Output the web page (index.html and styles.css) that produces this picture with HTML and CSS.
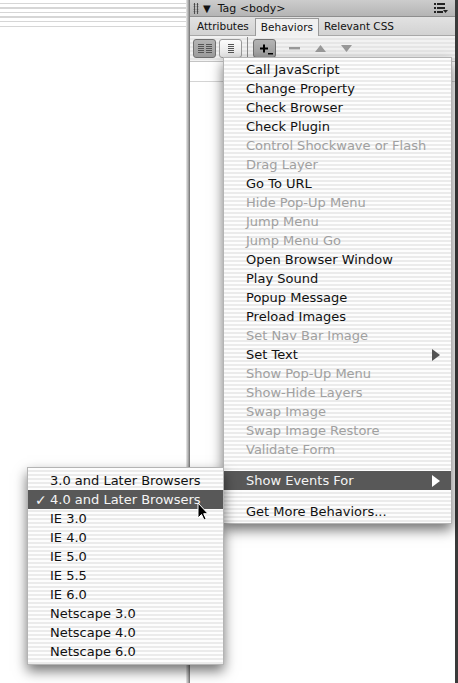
FILE: index.html
```html
<!DOCTYPE html>
<html>
<head>
	<meta charset="UTF-8">
	<title>Behaviors</title>
	<link rel="stylesheet" href="styles.css">
</head>
<body>
<div class="screen">
	<div class="doc">
		<div class="doc-bar"></div>
	</div>
	<div class="divider"></div>
	<div class="panel">
		<div class="panel-head">
			<span class="grip"></span>
			<span class="twisty">▼</span>
			<span class="panel-title">Tag &lt;body&gt;</span>
			<svg class="opts" width="14" height="10" viewBox="0 0 14 10">
				<rect x="0" y="0" width="2" height="2" fill="#222"/>
				<rect x="3" y="0" width="8" height="2" fill="#222"/>
				<rect x="0" y="4" width="2" height="2" fill="#222"/>
				<rect x="3" y="4" width="8" height="2" fill="#222"/>
				<rect x="0" y="8" width="2" height="2" fill="#222"/>
				<rect x="3" y="8" width="6" height="2" fill="#222"/>
				<path d="M9 7h5l-2.5 3z" fill="#222"/>
			</svg>
		</div>
		<div class="tabs">
			<span class="tab">Attributes</span>
			<span class="tab sel">Behaviors</span>
			<span class="tab">Relevant CSS</span>
		</div>
		<div class="tools">
			<span class="tbtn down">
				<svg width="14" height="9" viewBox="0 0 14 9">
					<path d="M0 .5h6M0 2.5h6M0 4.5h6M0 6.5h6M0 8.5h6M8 .5h6M8 2.5h6M8 4.5h6M8 6.5h6M8 8.5h6" stroke="#555" stroke-width="1"/>
				</svg>
			</span>
			<span class="tbtn">
				<svg width="6" height="9" viewBox="0 0 6 9">
					<path d="M0 .5h6M0 2.5h6M0 4.5h6M0 6.5h6M0 8.5h6" stroke="#555" stroke-width="1"/>
				</svg>
			</span>
			<span class="tsep"></span>
			<span class="tbtn down plus">
				<svg width="16" height="14" viewBox="0 0 16 14">
					<path d="M3 6.5h8M7 2.5v8" stroke="#000" stroke-width="2"/>
					<path d="M11 11h5v1.5h-5z" fill="#000"/>
				</svg>
			</span>
			<span class="tico">
				<svg width="11" height="3" viewBox="0 0 11 3"><rect width="11" height="2.4" fill="#999"/></svg>
			</span>
			<span class="tico">
				<svg width="11" height="7" viewBox="0 0 11 7"><path d="M0 7L5.5 0 11 7z" fill="#999"/></svg>
			</span>
			<span class="tico">
				<svg width="11" height="7" viewBox="0 0 11 7"><path d="M0 0h11L5.5 7z" fill="#999"/></svg>
			</span>
		</div>
		<div class="list">
			<div class="list-row"></div>
		</div>
	</div>
	<div class="edge"></div>
</div>

<div class="menu main">
	<div class="mi">Call JavaScript</div>
	<div class="mi">Change Property</div>
	<div class="mi">Check Browser</div>
	<div class="mi">Check Plugin</div>
	<div class="mi off">Control Shockwave or Flash</div>
	<div class="mi off">Drag Layer</div>
	<div class="mi">Go To URL</div>
	<div class="mi off">Hide Pop-Up Menu</div>
	<div class="mi off">Jump Menu</div>
	<div class="mi off">Jump Menu Go</div>
	<div class="mi">Open Browser Window</div>
	<div class="mi">Play Sound</div>
	<div class="mi">Popup Message</div>
	<div class="mi">Preload Images</div>
	<div class="mi off">Set Nav Bar Image</div>
	<div class="mi">Set Text<span class="arrow"></span></div>
	<div class="mi off">Show Pop-Up Menu</div>
	<div class="mi off">Show-Hide Layers</div>
	<div class="mi off">Swap Image</div>
	<div class="mi off">Swap Image Restore</div>
	<div class="mi off">Validate Form</div>
	<div class="msep"></div>
	<div class="mi hot">Show Events For<span class="arrow"></span></div>
	<div class="msep"></div>
	<div class="mi">Get More Behaviors...</div>
</div>

<div class="menu sub">
	<div class="mi">3.0 and Later Browsers</div>
	<div class="mi hot"><span class="check">✓</span>4.0 and Later Browsers</div>
	<div class="mi">IE 3.0</div>
	<div class="mi">IE 4.0</div>
	<div class="mi">IE 5.0</div>
	<div class="mi">IE 5.5</div>
	<div class="mi">IE 6.0</div>
	<div class="mi">Netscape 3.0</div>
	<div class="mi">Netscape 4.0</div>
	<div class="mi">Netscape 6.0</div>
</div>

<svg class="cursor" width="12" height="19" viewBox="0 0 12 19">
	<path d="M1 1v15l3.5-3.5 2.5 5.5 2.2-1-2.5-5.3H11z" fill="#000" stroke="#fff" stroke-width="1"/>
</svg>
</body>
</html>
```

FILE: styles.css
```css
*{
	box-sizing: border-box;
}
body{
	margin: 0;
	font-family: "DejaVu Sans", "Liberation Sans", sans-serif;
	background: #fff;
	overflow: hidden;
}
.screen{
	display: flex;
	width: 458px;
	height: 683px;
}
.doc{
	width: 186px;
	background: #fff;
}
.doc-bar{
	height: 27px;
	background: repeating-linear-gradient(#fff 0 3px, #d6d6d6 3px 4.5px);
}
.divider{
	width: 4px;
	background: linear-gradient(to right, #ececec, #9c9c9c 70%, #6e6e6e);
}
.panel{
	flex: 1;
	display: flex;
	flex-direction: column;
	background: #fff;
}
.panel-head{
	height: 17px;
	display: flex;
	align-items: center;
	padding: 0 7px 0 3px;
	background: linear-gradient(#cccccc, #b4b4b4);
	border-bottom: 1px solid #8e8e8e;
	font-size: 10.5px;
	color: #111;
}
.grip{
	width: 6px;
	height: 11px;
	background: radial-gradient(circle, #444 0.8px, transparent 1.1px) 0 0/3px 2.5px;
}
.twisty{
	font-size: 10px;
	margin-left: 4px;
	margin-right: 7px;
}
.panel-title{
	flex: 1;
	font-size: 11px;
}
.tabs{
	height: 19px;
	display: flex;
	align-items: flex-end;
	padding-left: 7px;
	background: linear-gradient(#e2e2e2, #d2d2d2);
	border-bottom: 1px solid #a8a8a8;
	font-size: 10.5px;
	color: #111;
}
.tab{
	height: 17px;
	line-height: 16px;
	margin-right: 10px;
}
.tab.sel{
	padding: 0 5px;
	margin-left: -4px;
	margin-right: 5px;
	margin-bottom: -1px;
	height: 18px;
	background: #f0f0f0;
	border: 1px solid #9a9a9a;
	border-bottom: none;
}
.tools{
	height: 26px;
	display: flex;
	align-items: center;
	padding-left: 3px;
	background: repeating-linear-gradient(#f2f2f2 0 2px, #e6e6e6 2px 4px);
	border-bottom: 1px solid #c4c4c4;
}
.tbtn{
	width: 23px;
	height: 19px;
	display: flex;
	align-items: center;
	justify-content: center;
	margin-right: 3px;
	background: linear-gradient(#fbfbfb, #e4e4e4);
	border: 1px solid #9a9a9a;
	border-radius: 3px;
}
.tbtn.down{
	background: linear-gradient(#b4b4b4, #9c9c9c);
	border-color: #707070;
}
.tsep{
	width: 1px;
	height: 23px;
	margin: 0 5px 0 2px;
	background: #8a8a8a;
}
.tico{
	width: 26px;
	display: flex;
	justify-content: center;
}
.tbtn.plus + .tico{
	margin-left: 2px;
}
.list{
	flex: 1;
	background: #fff;
}
.list-row{
	height: 20px;
	border-bottom: 1px solid #d4d4d4;
}
.edge{
	width: 3px;
	background: #3a3a3a;
}

/* menus */
.menu{
	position: absolute;
	background: repeating-linear-gradient(#fdfdfd 0 2px, #ebebeb 2px 4px);
	border: 1px solid #b4b4b4;
	box-shadow: 0 6px 12px rgba(0,0,0,0.55);
	font-size: 13px;
	color: #111;
}
.main{
	left: 223px;
	top: 57px;
	width: 229px;
	padding: 2px 0 2px;
}
.sub{
	left: 27px;
	top: 467px;
	width: 197px;
	padding: 3px 0 3px;
}
.mi{
	height: 19px;
	display: flex;
	align-items: center;
	justify-content: space-between;
	padding: 0 11px 0 22px;
	white-space: nowrap;
}
.mi.off{
	color: #a0a0a0;
}
.mi.hot{
	background: #585858;
	color: #f4f4f4;
}
.sub .mi{
	justify-content: flex-start;
}
.sub .mi.hot{
	padding-left: 7px;
}
.check{
	width: 15px;
	font-size: 14px;
}
.msep{
	height: 12px;
}
.arrow{
	width: 0;
	height: 0;
	border-left: 8px solid #555;
	border-top: 6px solid transparent;
	border-bottom: 6px solid transparent;
}
.hot .arrow{
	border-left-color: #fff;
}
.cursor{
	position: absolute;
	left: 197px;
	top: 502px;
}
```
